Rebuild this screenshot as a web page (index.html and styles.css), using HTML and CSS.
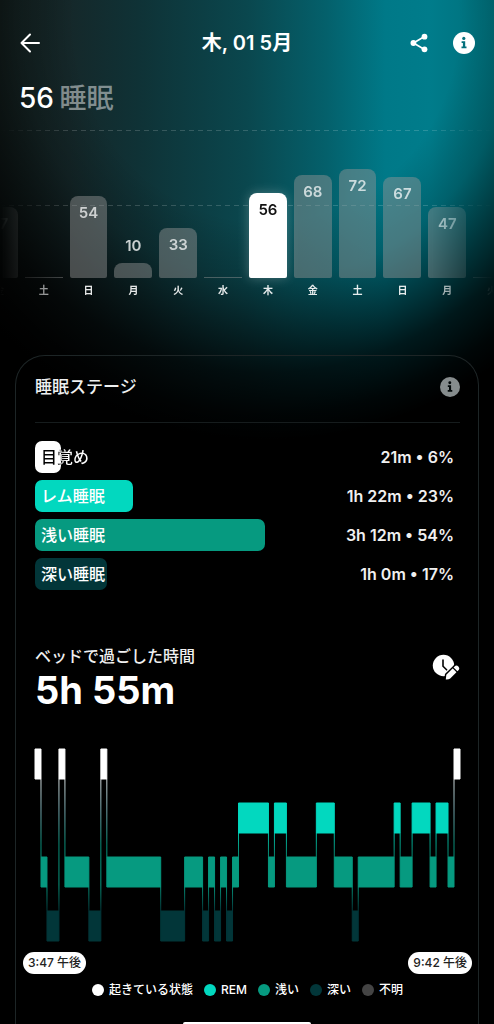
FILE: index.html
```html
<!DOCTYPE html>
<html lang="ja">
<head>
<meta charset="utf-8">
<meta name="viewport" content="width=device-width, initial-scale=1">
<title>睡眠</title>
<link rel="stylesheet" href="styles.css">
</head>
<body>
<main class="screen">
  <header class="topbar">
    <button class="icon-btn" type="button" aria-label="戻る">
      <svg width="22" height="22" viewBox="0 0 22 22" fill="none" stroke="#fff" stroke-width="2" stroke-linecap="round" stroke-linejoin="round"><path d="M20 11H2.500M11 2.500L2.500 11l8.500 8.500"/></svg>
    </button>
    <h1 class="topbar-title">木, 01 5月</h1>
    <div class="topbar-actions">
      <button class="icon-btn" type="button" aria-label="共有">
        <svg width="18" height="20" viewBox="0 0 18 20"><path d="M14.500 3.500L3.500 10l11 6.500" fill="none" stroke="#fff" stroke-width="1.700"/><circle cx="14.500" cy="3.700" r="2.900" fill="#fff"/><circle cx="3.400" cy="10" r="2.900" fill="#fff"/><circle cx="14.500" cy="16.300" r="2.900" fill="#fff"/></svg>
      </button>
      <button class="icon-btn" type="button" aria-label="情報">
        <svg width="22" height="22" viewBox="0 0 22 22"><circle cx="11" cy="11" r="11" fill="#fff"/><g fill="#04707c"><circle cx="10.800" cy="6.400" r="1.600"/><path d="M8.600 9.200h3.600v5.200h1.300v1.900H8.500v-1.900h1.400v-3.300H8.600z"/></g></svg>
      </button>
    </div>
  </header>

  <p class="score"><span class="score-value">56</span> <span class="score-label">睡眠</span></p>

  <section class="week" aria-label="週間スコア">
    <div class="gridlines"></div>
    <ul class="days">
      <li class="day"><div class="plot"><div class="bar" style="height:47%">47</div></div><span class="day-name">金</span></li>
      <li class="day"><div class="plot"><div class="bar empty"></div></div><span class="day-name">土</span></li>
      <li class="day"><div class="plot"><div class="bar" style="height:54%">54</div></div><span class="day-name">日</span></li>
      <li class="day"><div class="plot"><span class="above">10</span><div class="bar" style="height:10%"></div></div><span class="day-name">月</span></li>
      <li class="day"><div class="plot"><div class="bar" style="height:33%">33</div></div><span class="day-name">火</span></li>
      <li class="day"><div class="plot"><div class="bar empty"></div></div><span class="day-name">水</span></li>
      <li class="day"><div class="plot"><div class="bar current" style="height:56%">56</div></div><span class="day-name">木</span></li>
      <li class="day"><div class="plot"><div class="bar" style="height:68%">68</div></div><span class="day-name">金</span></li>
      <li class="day"><div class="plot"><div class="bar" style="height:72%">72</div></div><span class="day-name">土</span></li>
      <li class="day"><div class="plot"><div class="bar" style="height:67%">67</div></div><span class="day-name">日</span></li>
      <li class="day"><div class="plot"><div class="bar" style="height:47%">47</div></div><span class="day-name">月</span></li>
      <li class="day"><div class="plot"><div class="bar empty"></div></div><span class="day-name">火</span></li>
    </ul>
  </section>

  <section class="card">
    <div class="card-head">
      <h2 class="card-title">睡眠ステージ</h2>
      <button class="icon-btn" type="button" aria-label="睡眠ステージの情報">
        <svg width="20" height="20" viewBox="0 0 22 22"><circle cx="11" cy="11" r="11" fill="#868c8d"/><g fill="#020809"><circle cx="10.800" cy="6.400" r="1.600"/><path d="M8.600 9.200h3.600v5.200h1.300v1.900H8.500v-1.900h1.400v-3.300H8.600z"/></g></svg>
      </button>
    </div>

    <ul class="stages">
      <li class="stage"><div class="fill awake" style="width:6%"></div><span class="stage-name split">目覚め</span><span class="stage-value">21m • 6%</span></li>
      <li class="stage"><div class="fill rem" style="width:23%"></div><span class="stage-name">レム睡眠</span><span class="stage-value">1h 22m • 23%</span></li>
      <li class="stage"><div class="fill light" style="width:54%"></div><span class="stage-name">浅い睡眠</span><span class="stage-value">3h 12m • 54%</span></li>
      <li class="stage"><div class="fill deep" style="width:17%"></div><span class="stage-name">深い睡眠</span><span class="stage-value">1h 0m • 17%</span></li>
    </ul>

    <div class="bedtime">
      <div>
        <h3 class="bedtime-label">ベッドで過ごした時間</h3>
        <p class="bedtime-value">5h 55m</p>
      </div>
      <button class="icon-btn edit" type="button" aria-label="時間を編集">
        <svg width="28" height="28" viewBox="0 0 28 28"><circle cx="11.500" cy="11.500" r="10.700" fill="#fff"/><path d="M11 6v6.200l3.600 3.600" fill="none" stroke="#000" stroke-width="1.600" stroke-linecap="round"/><path d="M13.800 25.400l.5-4.700 8.300-8.300q1.900-1.700 3.700.1t.1 3.700l-8.200 8.200q-1.200 1.100-4.400 1z" fill="#fff" stroke="#000" stroke-width="2.800"/><path d="M13.800 25.400l.5-4.700 8.300-8.300q1.900-1.700 3.700.1t.1 3.700l-8.200 8.200q-1.200 1.100-4.400 1z" fill="#fff"/><path d="M20.600 13.400l4.900 4.900" stroke="#000" stroke-width="1.300"/></svg>
      </button>
    </div>

    <svg class="hypnogram" viewBox="0 0 426 192" preserveAspectRatio="none" role="img" aria-label="睡眠ステージの推移">
      <defs>
        <linearGradient id="fall" gradientUnits="userSpaceOnUse" x1="0" y1="30" x2="0" y2="162">
          <stop offset="0" stop-color="#d5dcde"/><stop offset=".25" stop-color="#6fa3aa"/><stop offset=".5" stop-color="#078d78"/><stop offset=".8" stop-color="#069a80"/><stop offset="1" stop-color="#023639"/>
        </linearGradient>
        <linearGradient id="dip" gradientUnits="userSpaceOnUse" x1="0" y1="84" x2="0" y2="108">
          <stop offset="0" stop-color="#00bfa5"/><stop offset="1" stop-color="#06846e"/>
        </linearGradient>
      </defs>
      <path stroke="url(#fall)" d="M6 30V108M30 30V108M72 30V108M420 30V108M24 30V162M66 30V162M12 138V162M54 138V162M126 138V162M150 138V162M168 138V162M174 138V162M180 138V162M186 138V162M192 138V162M198 138V162M318 138V162M324 138V162"/>
      <path stroke="url(#dip)" d="M204 84V108M234 84V108M240 84V108M252 84V108M282 84V108M300 84V108M360 84V108M366 84V108M378 84V108M396 84V108M402 84V108M414 84V108"/>
      <path class="h-deep" d="M12 162h12v30h-12zM54 162h12v30h-12zM126 162h24v30h-24zM168 162h6v30h-6zM180 162h6v30h-6zM192 162h6v30h-6zM318 162h6v30h-6z"/>
      <path class="h-light" d="M6 108h6v30h-6zM30 108h24v30h-24zM72 108h54v30h-54zM150 108h18v30h-18zM174 108h6v30h-6zM186 108h6v30h-6zM198 108h6v30h-6zM234 108h6v30h-6zM252 108h30v30h-30zM300 108h18v30h-18zM324 108h36v30h-36zM366 108h12v30h-12zM396 108h6v30h-6zM414 108h6v30h-6z"/>
      <path class="h-rem" d="M204 54h30v30h-30zM240 54h12v30h-12zM282 54h18v30h-18zM360 54h6v30h-6zM378 54h18v30h-18zM402 54h12v30h-12z"/>
      <path class="h-awake" d="M0 0h6v30h-6zM24 0h6v30h-6zM66 0h6v30h-6zM420 0h6v30h-6z"/>
    </svg>

    <div class="times"><time class="pill">3:47 午後</time><time class="pill">9:42 午後</time></div>

    <ul class="legend">
      <li class="key"><i class="dot awake"></i>起きている状態</li>
      <li class="key"><i class="dot rem"></i>REM</li>
      <li class="key"><i class="dot light"></i>浅い</li>
      <li class="key"><i class="dot deep"></i>深い</li>
      <li class="key"><i class="dot unknown"></i>不明</li>
    </ul>
  </section>
  <div class="home-indicator"></div>
</main>
</body>
</html>
```
FILE: styles.css
```css
* { box-sizing: border-box; }
body {
  margin: 0;
  background: #000;
  color: #fff;
  font-family: Inter, "Noto Sans CJK JP", sans-serif;
}
h1, h2, h3, p, ul { margin: 0; padding: 0; }
ul { list-style: none; }

.screen {
  position: relative;
  display: flex;
  flex-direction: column;
  min-height: 100vh;
  overflow: hidden;
  background:
    radial-gradient(ellipse 400px 420px at 54% 20px, transparent 48%, rgba(0, 0, 0, .2) 62%, rgba(0, 0, 0, .5) 73%, rgba(0, 0, 0, .8) 84%, rgba(0, 0, 0, .95) 94%, #000 100%) top / 100% 440px no-repeat,
    linear-gradient(90deg, #131f1e 0, #15282a 14%, #0f3236 28%, #0a474e 50%, #04606b 66%, #007988 78%, #007c8b 87%, #006f7a 100%) top / 100% 440px no-repeat,
    #000;
}

.icon-btn {
  display: flex;
  padding: 0;
  border: 0;
  background: none;
  cursor: pointer;
}

.topbar {
  display: grid;
  grid-template-columns: 1fr auto 1fr;
  align-items: center;
  height: 30px;
  margin-top: 28px;
  padding: 0 19px;
}
.topbar-title { font-size: 20px; line-height: 30px; font-weight: 600; }
.topbar-actions {
  display: flex;
  align-items: center;
  justify-content: flex-end;
  gap: 25px;
}

.score {
  margin-top: 20px;
  padding: 0 19px;
  font-size: 28px;
  line-height: 40px;
  font-weight: 500;
}
.score-label { margin-left: -2px; font-size: 27px; color: rgba(255, 255, 255, .48); }

.week {
  position: relative;
  margin-top: 8px;
  overflow: hidden;
  -webkit-mask-image: linear-gradient(90deg, transparent, #000 70px, #000 calc(100% - 68px), transparent);
  mask-image: linear-gradient(90deg, transparent, #000 70px, #000 calc(100% - 68px), transparent);
}
.gridlines {
  position: absolute;
  inset: 3px 0 auto;
  height: 76px;
  background:
    repeating-linear-gradient(90deg, rgba(255, 255, 255, .17) 0 5px, transparent 5px 9px) top / 100% 1px no-repeat,
    repeating-linear-gradient(90deg, rgba(255, 255, 255, .17) 0 5px, transparent 5px 9px) bottom / 100% 1px no-repeat;
}
.days {
  position: relative;
  display: grid;
  grid-template-columns: repeat(12, 1fr);
  gap: 7px;
  margin: 0 -17px 0 -20px;
}
.plot {
  display: flex;
  flex-direction: column;
  justify-content: flex-end;
  align-items: center;
  height: 151px;
}
.bar {
  width: 100%;
  padding-top: 7px;
  border-radius: 8px 8px 2px 2px;
  background: rgba(150, 150, 150, .46);
  color: rgba(255, 255, 255, .72);
  font-size: 15px;
  line-height: 20px;
  font-weight: 600;
  text-align: center;
}
.bar.empty { height: 1px; padding: 0; border-radius: 0; }
.bar.current {
  background: #fff;
  color: #111;
  box-shadow: 0 0 12px rgba(255, 255, 255, .25);
}
.above {
  margin-bottom: 7px;
  font-size: 15px;
  line-height: 20px;
  font-weight: 600;
  color: rgba(255, 255, 255, .78);
}
.day-name {
  display: block;
  margin: 4px 0 16px;
  font-size: 10px;
  line-height: 16px;
  font-weight: 600;
  text-align: center;
  color: rgba(255, 255, 255, .9);
}

.card {
  flex: 1;
  margin: 41px 15px 0;
  padding: 0 18px 0 19px;
  border: 1px solid #1d2526;
  border-bottom: 0;
  border-radius: 30px 30px 0 0;
}
.card-head {
  display: flex;
  align-items: center;
  justify-content: space-between;
  padding: 18px 0 22px;
  border-bottom: 1px solid #161c1d;
}
.card-title { font-size: 17px; line-height: 26px; font-weight: 500; color: #eef0f0; }

.stages {
  display: grid;
  gap: 7px;
  margin-top: 18px;
}
.stage {
  position: relative;
  display: flex;
  align-items: center;
  justify-content: space-between;
  height: 32px;
  padding: 0 6px;
  font-size: 16px;
  line-height: 24px;
  font-weight: 500;
}
.fill {
  position: absolute;
  inset: 0 auto 0 0;
  border-radius: 7px;
}
.stage-name, .stage-value { position: relative; }
.stage-value { font-weight: 600; color: #f0f0f0; }
.split {
  background: linear-gradient(90deg, #000 17px, #999 19px, #fff 26px);
  -webkit-background-clip: text;
  background-clip: text;
  color: transparent;
}
.awake { background: #fff; }
.rem { background: #02d8bf; }
.light { background: #069a80; }
.deep { background: #023639; }
.unknown { background: #444; }

.bedtime {
  display: flex;
  align-items: flex-start;
  justify-content: space-between;
  margin-top: 56px;
}
.bedtime-label { font-size: 16px; line-height: 20px; font-weight: 500; color: #f0f0f0; }
.bedtime-value { font-size: 38px; line-height: 48px; font-weight: 700; }
.edit { margin-top: 8px; }

.hypnogram {
  display: block;
  width: 100%;
  height: 192px;
  margin-top: 35px;
  overflow: visible;
}
.h-awake { fill: #fff; stroke: #fff; }
.h-rem { fill: #02d8bf; stroke: #02d8bf; }
.h-light { fill: #069a80; stroke: #069a80; }
.h-deep { fill: #023639; stroke: #023639; }

.times {
  display: flex;
  justify-content: space-between;
  margin: 11px -12px 0;
}
.pill {
  padding: 0 5px;
  border-radius: 11px;
  background: #fff;
  color: #222;
  font-size: 12px;
  line-height: 22px;
  font-weight: 500;
}
.legend {
  display: flex;
  justify-content: center;
  gap: 11px;
  margin-top: 7px;
}
.key {
  display: flex;
  align-items: center;
  gap: 5px;
  font-size: 12px;
  line-height: 18px;
  font-weight: 500;
}
.dot { width: 12px; height: 12px; border-radius: 50%; }

.home-indicator {
  position: absolute;
  bottom: 0;
  left: 37%;
  right: 37%;
  height: 2px;
  border-radius: 2px 2px 0 0;
  background: #fff;
}
```
